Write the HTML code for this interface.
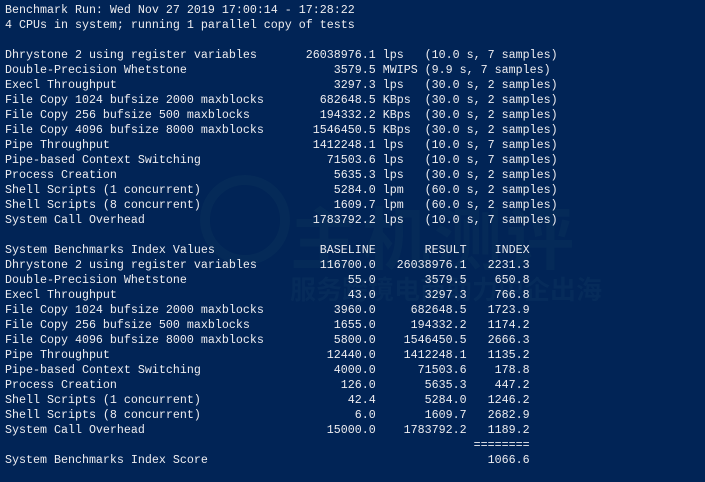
<!DOCTYPE html>
<html><head><meta charset="utf-8"><style>
html,body{margin:0;padding:0;background:#012456;width:705px;height:482px;overflow:hidden}
pre{position:relative;z-index:2;margin:0;padding:2.5px 0 0 5px;font-family:"Liberation Mono",monospace;font-size:11.67px;line-height:15px;color:#eeedf0;white-space:pre}
span{display:inline-block;white-space:pre}
.n{width:41ch}.v{width:12ch;text-align:right}
.m{width:40ch}.b{width:13ch;text-align:right}.r{width:13ch;text-align:right}.i{width:9ch;text-align:right}
.wm{position:absolute;z-index:1;color:#062b5a;font-family:"Noto Sans CJK SC",sans-serif;white-space:nowrap}
</style></head><body>
<div class="wm" style="left:290px;top:185px;font-size:68px;font-weight:bold;letter-spacing:4px;color:#052a58">主机测评</div>
<div class="wm" style="left:290px;top:270px;font-size:26px;font-weight:bold;letter-spacing:0px">服务跨境电商助力中企出海</div>
<div class="wm" style="left:200px;top:175px;width:90px;height:90px;border-radius:50%;border:10px solid #052a58;box-sizing:border-box"></div>
<pre>Benchmark Run: Wed Nov 27 2019 17:00:14 - 17:28:22
4 CPUs in system; running 1 parallel copy of tests

<span class="n">Dhrystone 2 using register variables</span><span class="v">26038976.1</span> lps   (10.0 s, 7 samples)
<span class="n">Double-Precision Whetstone</span><span class="v">3579.5</span> MWIPS (9.9 s, 7 samples)
<span class="n">Execl Throughput</span><span class="v">3297.3</span> lps   (30.0 s, 2 samples)
<span class="n">File Copy 1024 bufsize 2000 maxblocks</span><span class="v">682648.5</span> KBps  (30.0 s, 2 samples)
<span class="n">File Copy 256 bufsize 500 maxblocks</span><span class="v">194332.2</span> KBps  (30.0 s, 2 samples)
<span class="n">File Copy 4096 bufsize 8000 maxblocks</span><span class="v">1546450.5</span> KBps  (30.0 s, 2 samples)
<span class="n">Pipe Throughput</span><span class="v">1412248.1</span> lps   (10.0 s, 7 samples)
<span class="n">Pipe-based Context Switching</span><span class="v">71503.6</span> lps   (10.0 s, 7 samples)
<span class="n">Process Creation</span><span class="v">5635.3</span> lps   (30.0 s, 2 samples)
<span class="n">Shell Scripts (1 concurrent)</span><span class="v">5284.0</span> lpm   (60.0 s, 2 samples)
<span class="n">Shell Scripts (8 concurrent)</span><span class="v">1609.7</span> lpm   (60.0 s, 2 samples)
<span class="n">System Call Overhead</span><span class="v">1783792.2</span> lps   (10.0 s, 7 samples)

<span class="m">System Benchmarks Index Values</span><span class="b">BASELINE</span><span class="r">RESULT</span><span class="i">INDEX</span>
<span class="m">Dhrystone 2 using register variables</span><span class="b">116700.0</span><span class="r">26038976.1</span><span class="i">2231.3</span>
<span class="m">Double-Precision Whetstone</span><span class="b">55.0</span><span class="r">3579.5</span><span class="i">650.8</span>
<span class="m">Execl Throughput</span><span class="b">43.0</span><span class="r">3297.3</span><span class="i">766.8</span>
<span class="m">File Copy 1024 bufsize 2000 maxblocks</span><span class="b">3960.0</span><span class="r">682648.5</span><span class="i">1723.9</span>
<span class="m">File Copy 256 bufsize 500 maxblocks</span><span class="b">1655.0</span><span class="r">194332.2</span><span class="i">1174.2</span>
<span class="m">File Copy 4096 bufsize 8000 maxblocks</span><span class="b">5800.0</span><span class="r">1546450.5</span><span class="i">2666.3</span>
<span class="m">Pipe Throughput</span><span class="b">12440.0</span><span class="r">1412248.1</span><span class="i">1135.2</span>
<span class="m">Pipe-based Context Switching</span><span class="b">4000.0</span><span class="r">71503.6</span><span class="i">178.8</span>
<span class="m">Process Creation</span><span class="b">126.0</span><span class="r">5635.3</span><span class="i">447.2</span>
<span class="m">Shell Scripts (1 concurrent)</span><span class="b">42.4</span><span class="r">5284.0</span><span class="i">1246.2</span>
<span class="m">Shell Scripts (8 concurrent)</span><span class="b">6.0</span><span class="r">1609.7</span><span class="i">2682.9</span>
<span class="m">System Call Overhead</span><span class="b">15000.0</span><span class="r">1783792.2</span><span class="i">1189.2</span>
<span class="m"></span><span class="b"></span><span class="r"></span><span class="i">========</span>
<span class="m">System Benchmarks Index Score</span><span class="b"></span><span class="r"></span><span class="i">1066.6</span>
</pre>
</body></html>
